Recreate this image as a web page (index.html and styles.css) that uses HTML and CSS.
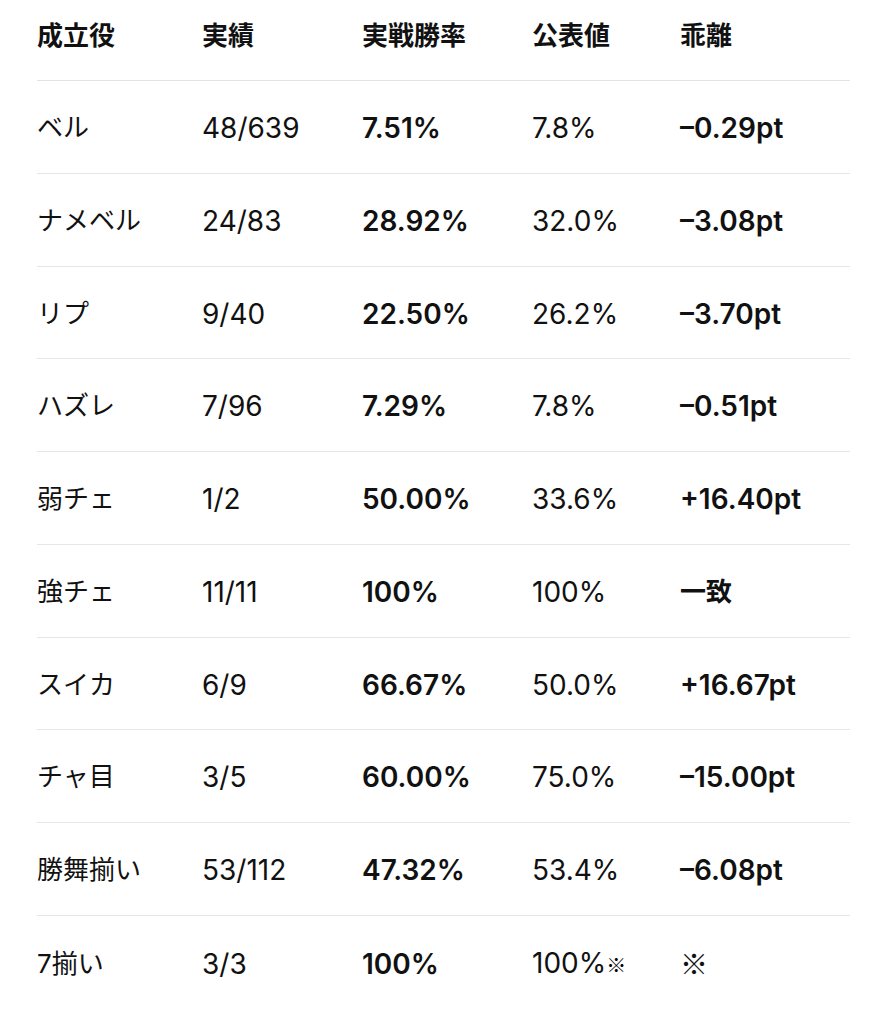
FILE: index.html
```html
<!DOCTYPE html>
<html lang="ja">
<head>
<meta charset="utf-8">
<link rel="stylesheet" href="styles.css">
</head>
<body>
<table class="stats">
  <colgroup>
    <col class="c1"><col class="c2"><col class="c3"><col class="c4"><col class="c5">
  </colgroup>
  <thead>
    <tr><th>成立役</th><th>実績</th><th>実戦勝率</th><th>公表値</th><th>乖離</th></tr>
  </thead>
  <tbody>
    <tr><td class="ja">ベル</td><td>48/639</td><td class="b">7.51%</td><td>7.8%</td><td class="b">–0.29pt</td></tr>
    <tr><td class="ja">ナメベル</td><td>24/83</td><td class="b">28.92%</td><td>32.0%</td><td class="b">–3.08pt</td></tr>
    <tr><td class="ja">リプ</td><td>9/40</td><td class="b">22.50%</td><td>26.2%</td><td class="b">–3.70pt</td></tr>
    <tr><td class="ja">ハズレ</td><td>7/96</td><td class="b">7.29%</td><td>7.8%</td><td class="b">–0.51pt</td></tr>
    <tr><td class="ja">弱チェ</td><td>1/2</td><td class="b">50.00%</td><td>33.6%</td><td class="b">+16.40pt</td></tr>
    <tr><td class="ja">強チェ</td><td>11/11</td><td class="b">100%</td><td>100%</td><td class="b ja">一致</td></tr>
    <tr><td class="ja">スイカ</td><td>6/9</td><td class="b">66.67%</td><td>50.0%</td><td class="b">+16.67pt</td></tr>
    <tr><td class="ja">チャ目</td><td>3/5</td><td class="b">60.00%</td><td>75.0%</td><td class="b">–15.00pt</td></tr>
    <tr><td class="ja">勝舞揃い</td><td>53/112</td><td class="b">47.32%</td><td>53.4%</td><td class="b">–6.08pt</td></tr>
    <tr class="last"><td class="ja">7揃い</td><td>3/3</td><td class="b">100%</td><td>100%<span class="note">※</span></td><td class="ja"><span class="mark">※</span></td></tr>
  </tbody>
</table>
</body>
</html>
```
FILE: styles.css
```css
html, body {
  margin: 0;
  padding: 0;
  background: #fff;
}
body {
  font-family: Inter, "Noto Sans CJK JP", sans-serif;
  color: #111;
}
.stats {
  margin-left: 37px;
  width: 813px;
  border-collapse: collapse;
  table-layout: fixed;
}
.c1 { width: 165px; }
.c2 { width: 160px; }
.c3 { width: 170px; }
.c4 { width: 148px; }
.c5 { width: 170px; }
.stats th {
  text-align: left;
  font-size: 26px;
  font-weight: 700;
  line-height: 36px;
  padding: 18px 0 26px;
  border-bottom: 1px solid #e3e3e3;
}
.stats td {
  text-align: left;
  font-size: 28px;
  font-weight: 400;
  line-height: 36px;
  padding: 29px 0 26.78px;
  border-bottom: 1px solid #e6e6e6;
  white-space: nowrap;
}
.stats td.ja {
  font-size: 26px;
}
.stats tr.last td {
  border-bottom: none;
}
.stats td.b {
  font-weight: 600;
}
.note {
  font-family: "Noto Sans CJK JP", sans-serif;
  font-size: 20px;
  font-weight: 900;
  color: #000;
}
.mark {
  font-family: "Noto Sans CJK JP", sans-serif;
  font-size: 28px;
  font-weight: 300;
}
```
